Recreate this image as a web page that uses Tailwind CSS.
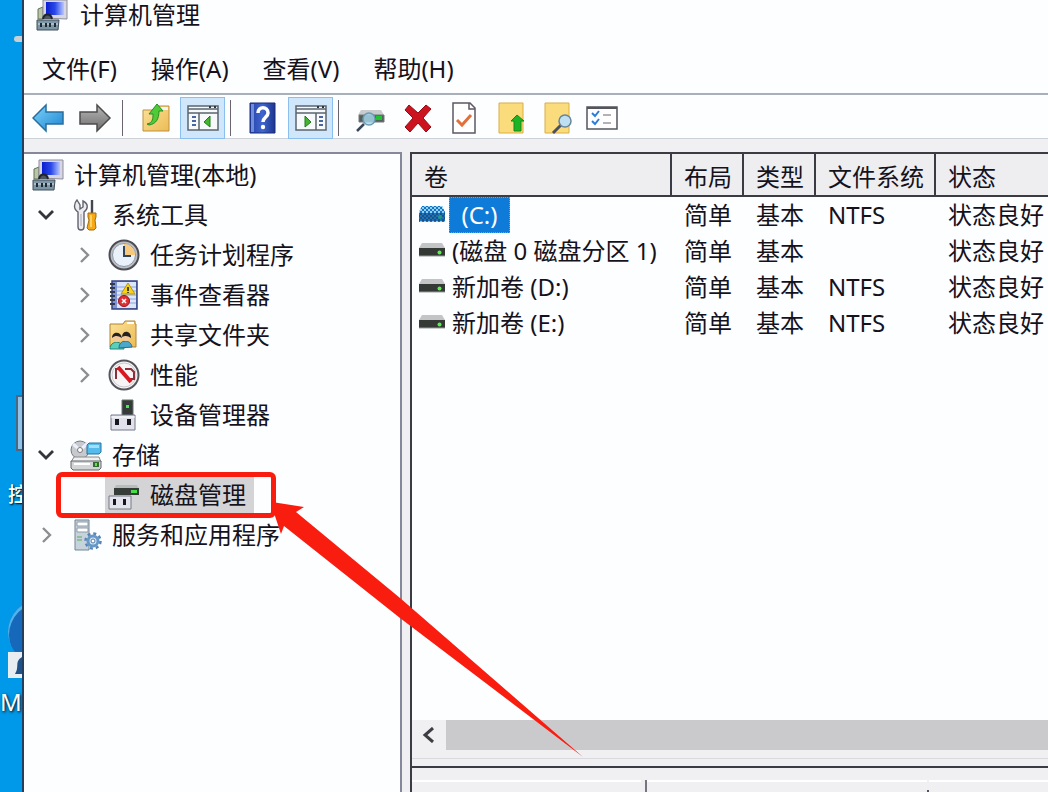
<!DOCTYPE html>
<html lang="zh-CN">
<head>
<meta charset="utf-8">
<title>计算机管理</title>
<script src="https://cdn.jsdelivr.net/npm/@tailwindcss/browser@4"></script>
</head>
<body class="relative flex h-screen overflow-hidden bg-[#0098e8] font-['Noto_Sans','Noto_Sans_CJK_SC',sans-serif] text-2xl leading-8 text-[#15121c]">

<svg class="absolute size-0" aria-hidden="true">
  <defs>
    <linearGradient id="gBlue" x1="0" y1="0" x2="1" y2="1"><stop offset="0" stop-color="#7fd4fb"/><stop offset="1" stop-color="#1b84d0"/></linearGradient>
    <linearGradient id="gScreen" x1="0" y1="0" x2="1" y2="0"><stop offset="0" stop-color="#0a1ed0"/><stop offset=".5" stop-color="#2a48e8"/><stop offset="1" stop-color="#b9c8ff"/></linearGradient>
    <linearGradient id="gGray" x1="0" y1="0" x2="0" y2="1"><stop offset="0" stop-color="#b8b8b8"/><stop offset="1" stop-color="#6c6c6c"/></linearGradient>
    <linearGradient id="gFold" x1="0" y1="0" x2="1" y2="1"><stop offset="0" stop-color="#fbe29a"/><stop offset="1" stop-color="#edbb55"/></linearGradient>
    <linearGradient id="gHelp" x1="0" y1="0" x2="1" y2="0"><stop offset="0" stop-color="#2742a8"/><stop offset=".5" stop-color="#3f66cf"/><stop offset="1" stop-color="#1c348f"/></linearGradient>
    <pattern id="dots" width="4" height="4" patternUnits="userSpaceOnUse"><path d="M0 0h2v2H0zM2 2h2v2H2z" fill="#1673c4"/></pattern>
    <symbol id="computer" viewBox="0 0 32 32">
      <path d="M2 10l5-2v12H2z" fill="#b9c7a6" stroke="#66705c"/>
      <path d="M7 1h24v19l-24-1z" fill="#d7d7e4" stroke="#8d8d9c"/>
      <path d="M10 3h18v13H10z" fill="url(#gScreen)"/>
      <path d="M7 20c1-6 8-6 9 0" fill="#4d5560" stroke="#20242b" stroke-width="2"/>
      <path d="M1 21h22l-1 10H1z" fill="#7d96a5" stroke="#414f5c"/>
      <path d="M2 25h20" stroke="#dbe5ea"/><path d="M5 24v4M10 24v4M14 24v4M19 24v4" stroke="#1d2934" stroke-width="2"/>
    </symbol>
    <symbol id="tools" viewBox="0 0 32 32">
      <path d="M7 1L10 6V10L13 8V2C19 5 18 10 14 13V28C14 32 8 32 8 28V13C3 10 4 4 7 1Z" fill="#ececf0" stroke="#62626d" stroke-width="1.4"/><path d="M11 15v12" stroke="#a6a6b4"/>
      <path d="M22 1v13" stroke="#454550" stroke-width="2.4"/>
      <path d="M18 14h8v4l-1 3 1 8-2 2h-5l-2-2 2-8-1-3z" fill="#f6a817" stroke="#a56d0b"/><path d="M21 16v12" stroke="#ffe080" stroke-width="1.5"/>
    </symbol>
    <symbol id="clock" viewBox="0 0 32 32">
      <circle cx="16" cy="16" r="14.5" fill="#bdbdc2" stroke="#4c4c55" stroke-width="2"/><circle cx="16" cy="16" r="11.5" fill="#e9f1fa" stroke="#8d99a5"/>
      <path d="M16 16V5a11 11 0 0 1 11 11z" fill="#f7c97e"/><path d="M16 7v10h7" fill="none" stroke="#30445a" stroke-width="2"/>
    </symbol>
    <symbol id="events" viewBox="0 0 32 32">
      <path d="M4 2h25v28H4z" fill="#7e95d5" stroke="#35427e" stroke-width="1.5"/><path d="M9 3h19v26H9z" fill="#dbe6fb"/><path d="M9 8h19M9 12h19M9 16h19M9 20h19M9 24h19" stroke="#8aa4de"/>
      <path d="M2 5h5M2 9h5M2 13h5M2 17h5M2 21h5M2 25h5" stroke="#34394c" stroke-width="2"/>
      <path d="M20 4l7 11H13z" fill="#f8d215" stroke="#b5950f"/><path d="M20 8v4M20 13v1" stroke="#222" stroke-width="1.6"/>
      <circle cx="16" cy="22" r="5.5" fill="#df3036" stroke="#99141c"/><path d="M14 20l4 4M18 20l-4 4" stroke="#fff" stroke-width="1.5"/>
    </symbol>
    <symbol id="shared" viewBox="0 0 32 32">
      <path d="M2 5h13l2-3h10v3h1v23H2z" fill="url(#gFold)" stroke="#b08435"/><path d="M19 4h7" stroke="#fff" stroke-width="2"/>
      <path d="M2 30c0-9 13-9 14 0z" fill="#5ad0ba" stroke="#218576"/><path d="M11 29c0-9 12-9 13-1z" fill="#4ba8cd" stroke="#276f91"/>
      <circle cx="9" cy="19" r="4" fill="#f3c99b"/><circle cx="18" cy="18" r="4" fill="#f3c99b"/>
      <path d="M4 19c0-7 9-7 10 0-4-2-6-3-10 0zM14 18c0-7 9-7 9 1-3-2-5-3-9-1z" fill="#222"/>
    </symbol>
    <symbol id="perf" viewBox="0 0 32 32">
      <circle cx="16" cy="16" r="14.5" fill="#f6f4f4" stroke="#55555c" stroke-width="2"/><circle cx="16" cy="16" r="12" fill="none" stroke="#c9c9cd"/>
      <path d="M8 20V10h4M17 10h6l3 3v7h-4" fill="none" stroke="#8b3038" stroke-width="2"/><path d="M10 8l13 15" stroke="#d81922" stroke-width="4"/>
    </symbol>
    <symbol id="device" viewBox="0 0 32 32">
      <path d="M14 1h11v17H14z" fill="#343b38" stroke="#6b716e"/><path d="M18 6h3v3h-3z" fill="#54e05a"/>
      <path d="M3 16h24v15H3z" fill="#e0e1ea" stroke="#767989"/><path d="M3 18h24" stroke="#fff"/><path d="M7 20h4v6H7zM19 20h4v6h-4z" fill="#17171d"/>
    </symbol>
    <symbol id="storage" viewBox="0 0 32 32">
      <circle cx="10" cy="11" r="9" fill="#c6c9cd" stroke="#777b80"/><path d="M10 11L3 5M10 11l8-7" stroke="#eef" stroke-width="3"/><circle cx="10" cy="11" r="2.5" fill="#fff" stroke="#777"/>
      <path d="M17 6l2-2h12v9l-2 2H17z" fill="#55bbec" stroke="#23749f"/><path d="M19 6h10v3H19z" fill="#a3def8"/>
      <path d="M4 18h25l2 5H1z" fill="#eff0f2" stroke="#888"/><path d="M1 22h30v7l-2 2H3l-2-2z" fill="#d2d4d6" stroke="#64676a"/><path d="M4 25h16" stroke="#fff" stroke-width="2"/><path d="M23 23h6v5h-6z" fill="#316b31"/><path d="M25 24h2v3h-2z" fill="#62e348"/>
    </symbol>
    <symbol id="diskmgmt" viewBox="0 0 32 32">
      <path d="M8 6h21l2 4H6z" fill="#b9bcbc"/><path d="M6 9h25v7H6z" fill="#363c38"/><path d="M23 11h6v3h-6z" fill="#43e044"/>
      <path d="M1 17h22v13H1z" fill="#e3e4ec" stroke="#777a87"/><path d="M5 20h3v6H5zM15 20h3v6h-3z" fill="#17171d"/>
    </symbol>
    <symbol id="services" viewBox="0 0 32 32">
      <path d="M5 1h14v30H5z" fill="#c6d3dd" stroke="#738594"/><path d="M7 3h11v4H7zM7 9h11v4H7z" fill="#fff" stroke="#8d9ba7"/><path d="M7 18h5M7 21h5" stroke="#52b04f"/>
      <circle cx="23" cy="22" r="7.5" fill="none" stroke="#5484b8" stroke-width="2.5" stroke-dasharray="3 2.9"/><circle cx="23" cy="22" r="5" fill="#d5e7f7" stroke="#6698c7" stroke-width="3"/><circle cx="23" cy="22" r="2" fill="#fff" stroke="#5079a5"/>
    </symbol>
    <symbol id="down" viewBox="0 0 28 28"><path d="M7 10l7 7 7-7" fill="none" stroke="#34343a" stroke-width="2.8"/></symbol>
    <symbol id="right" viewBox="0 0 28 28"><path d="M11 7l7 7-7 7" fill="none" stroke="#8e8e92" stroke-width="2.4"/></symbol>
    <symbol id="drive" viewBox="0 0 28 20">
      <path d="M4 2h20l3 5H1z" fill="#c2c4c6"/><path d="M1 7h26v8H1z" fill="#343936"/><path d="M1 15h26" stroke="#9a9a9a"/><circle cx="21.5" cy="11.5" r="2" fill="#59f04e"/>
    </symbol>
    <symbol id="driveSel" viewBox="0 0 28 20">
      <path d="M4 1h20l3 6v10H1V7z" fill="#8fd0f5"/><path d="M1 8h26v8H1z" fill="#22507c"/><path d="M4 1h20l3 6v10H1V7z" fill="url(#dots)"/><circle cx="22" cy="12" r="2" fill="#1f9a86"/>
    </symbol>
  </defs>
</svg>

<!-- Desktop strip behind the window -->
<aside class="relative w-[22px] shrink-0 overflow-hidden text-xl text-white" aria-hidden="true">
  <div class="absolute left-3.5 top-9 h-1.5 w-3 rounded-full bg-[#c9cfd3]"></div>
  <div class="absolute left-4 top-[395px] h-14 w-3 border-2 border-[#4f6680] bg-[#8fc4e8]"></div>
  <span class="absolute left-2 top-[481px] font-medium [text-shadow:1px_1px_2px_#000]">控</span>
  <div class="absolute left-2 top-[600px] size-16 rounded-full bg-[#1668ba] shadow-[inset_1px_3px_0_#4fb2ea]"></div>
  <svg class="absolute left-2 top-[652px]" width="26" height="26"><path d="M0 0h26v26H0z" fill="#e8edf2"/><path d="M14 5c-8 5-2 9-7 17h15V5z" fill="#1f5288"/></svg>
  <span class="absolute left-0 top-[686px] text-2xl [text-shadow:1px_1px_3px_#000]">M</span>
</aside>

<div class="flex min-w-0 flex-1 flex-col border-l-2 border-[#263f5c] bg-[#fdfeff]">
  <header class="flex h-[37px] items-center gap-3 pl-3 pb-[7px]">
    <svg class="size-8"><use href="#computer"/></svg>
    <h1>计算机管理</h1>
  </header>

  <nav class="flex h-14 items-center gap-[34px] pl-[18px] pt-2">
    <button>文件(F)</button><button>操作(A)</button><button>查看(V)</button><button>帮助(H)</button>
  </nav>

  <div class="flex h-[46px] shrink-0 items-center border-y border-t-2 border-[#a9b0b9] border-b-[#cdd2d8] pl-2 pt-0.5" role="toolbar" aria-label="工具栏">
    <button aria-label="后退" class="w-[46px]"><svg width="34" height="32"><path d="M1 16L14 3v7h17v12H14v7z" fill="url(#gBlue)" stroke="#286d9f" stroke-width="1.5"/></svg></button>
    <button aria-label="前进" class="w-[44px]"><svg width="34" height="32"><path d="M32 16L19 3v7H2v12h17v7z" fill="url(#gGray)" stroke="#4c4c4c" stroke-width="1.5"/></svg></button>
    <span class="h-9 w-px bg-[#69646f]"></span>
    <button aria-label="上移" class="ml-[17px] w-[40px]"><svg width="32" height="32"><path d="M3 8h14l2-4h10v25H3z" fill="url(#gFold)" stroke="#bf913f"/><path d="M20 5h8v3h-8z" fill="#eef6fa"/><path d="M7 22c6-1 6-6 6-10H9L17 2l6 7h-4c0 8-3 13-10 14z" fill="#4fca38" stroke="#248f22"/></svg></button>
    <button aria-label="显示控制台树" class="flex h-[42px] w-[45px] items-center justify-center border border-[#8bc0ee] bg-[#cfe6fb]"><svg width="32" height="28"><path d="M1 2h30v24H1z" fill="#f7f9fb" stroke="#5b6470" stroke-width="1.5"/><path d="M1 5h30M1 9h30M12 9v17" stroke="#5b6470" stroke-width="1.5"/><path d="M22 3h2M27 3h2" stroke="#333" stroke-width="2"/><path d="M5 13h4M5 17h4M5 21h4" stroke="#4a66a2" stroke-width="2"/><path d="M23 12v11l-6-5z" fill="#44b531" stroke="#227a1c"/></svg></button>
    <span class="ml-[5px] h-9 w-px bg-[#69646f]"></span>
    <button aria-label="帮助" class="ml-[18px] w-[39px]"><svg width="28" height="34"><path d="M1 2h25v30H1z" fill="url(#gHelp)" stroke="#182c78"/><path d="M2 3h3v28H2z" fill="#6f8cdd"/><path d="M9 12c0-7 10-7 10 0 0 4-5 4-5 9" fill="none" stroke="#fff" stroke-width="3.5"/><circle cx="14" cy="26" r="2.2" fill="#fff"/></svg></button>
    <button aria-label="显示操作窗格" class="flex h-[42px] w-[45px] items-center justify-center border border-[#8bc0ee] bg-[#cfe6fb]"><svg width="32" height="28"><path d="M1 2h30v24H1z" fill="#f7f9fb" stroke="#5b6470" stroke-width="1.5"/><path d="M1 5h30M1 9h30M21 9v17" stroke="#5b6470" stroke-width="1.5"/><path d="M22 3h2M27 3h2" stroke="#333" stroke-width="2"/><path d="M24 13h4M24 17h4M24 21h4" stroke="#4a66a2" stroke-width="2"/><path d="M10 12v11l6-5z" fill="#44b531" stroke="#227a1c"/></svg></button>
    <span class="ml-[5px] h-9 w-px bg-[#69646f]"></span>
    <button aria-label="重新扫描磁盘" class="ml-[17px] w-[47px]"><svg width="30" height="32"><path d="M5 8h20l3 5H2z" fill="#c8cccf"/><path d="M3 13h25v7H3z" fill="#53605e" stroke="#777"/><path d="M20 14h6v4h-6z" fill="#1fc431"/><circle cx="13" cy="17" r="6" fill="#a9d9ed" fill-opacity=".8" stroke="#6a9db3" stroke-width="1.5"/><path d="M8 22l-7 7" stroke="#39475d" stroke-width="2.5"/></svg></button>
    <button aria-label="删除" class="w-[48px]"><svg width="30" height="32"><path d="M6 3l9 8 8-8 5 4-8 9 8 9-5 5-8-9-8 9-5-5 8-9-8-8z" fill="#cc1420" stroke="#960c15"/></svg></button>
    <button aria-label="属性" class="w-[47px]"><svg width="26" height="34"><path d="M2 2h17l5 5v25H2z" fill="#fff" stroke="#5c5864" stroke-width="1.5"/><path d="M18 2v6h6" fill="none" stroke="#5c5864" stroke-width="1.5"/><path d="M6 19l5 5 9-10" fill="none" stroke="#e3703a" stroke-width="3"/></svg></button>
    <button aria-label="上一级文件夹" class="w-[46px]"><svg width="28" height="34"><path d="M1 2h24v30H1z" fill="#fbdc7c" stroke="#d9ae45"/><path d="M13 20l6-6 7 6h-3v10h-7V20z" fill="#1eb324" stroke="#168a1b"/></svg></button>
    <button aria-label="查找" class="w-[42px]"><svg width="30" height="34"><path d="M1 2h24v30H1z" fill="#fbdc7c" stroke="#d9ae45"/><path d="M17 24l-8 8" stroke="#4a4f5c" stroke-width="3"/><circle cx="21" cy="20" r="6" fill="#bfe0f3" stroke="#66869c" stroke-width="1.5"/></svg></button>
    <button aria-label="列表"><svg width="32" height="26"><path d="M1 2h30v22H1z" fill="#fff" stroke="#54545e" stroke-width="1.5"/><path d="M1 3h30" stroke="#54545e" stroke-width="2"/><path d="M6 8l3 3 4-5M6 16l3 3 4-5" fill="none" stroke="#2b7bd8" stroke-width="2"/><path d="M17 10h8M17 18h8" stroke="#9a9a9f" stroke-width="1.5"/></svg></button>
  </div>

  <main class="flex min-h-0 flex-1 gap-2 bg-[#f0f0f2] pt-[13px]">
    <section class="w-[378px] shrink-0 border-r-2 border-t-2 border-[#85879a] bg-[#fdfeff]" aria-label="控制台树">
      <ul class="whitespace-nowrap">
        <li class="flex h-10 items-center gap-2.5 pl-2 pt-0.5"><svg class="size-8"><use href="#computer"/></svg><span>计算机管理(本地)</span></li>
        <li class="flex h-10 items-center gap-2.5 pl-2 pt-0.5"><svg class="size-7"><use href="#down"/></svg><svg class="size-8"><use href="#tools"/></svg><span>系统工具</span></li>
        <li class="flex h-10 items-center gap-2.5 pl-[46px] pt-0.5"><svg class="size-7"><use href="#right"/></svg><svg class="size-8"><use href="#clock"/></svg><span>任务计划程序</span></li>
        <li class="flex h-10 items-center gap-2.5 pl-[46px] pt-0.5"><svg class="size-7"><use href="#right"/></svg><svg class="size-8"><use href="#events"/></svg><span>事件查看器</span></li>
        <li class="flex h-10 items-center gap-2.5 pl-[46px] pt-0.5"><svg class="size-7"><use href="#right"/></svg><svg class="size-8"><use href="#shared"/></svg><span>共享文件夹</span></li>
        <li class="flex h-10 items-center gap-2.5 pl-[46px] pt-0.5"><svg class="size-7"><use href="#right"/></svg><svg class="size-8"><use href="#perf"/></svg><span>性能</span></li>
        <li class="flex h-10 items-center gap-2.5 pl-[84px] pt-0.5"><svg class="size-8"><use href="#device"/></svg><span>设备管理器</span></li>
        <li class="flex h-10 items-center gap-2.5 pl-2 pt-0.5"><svg class="size-7"><use href="#down"/></svg><svg class="size-8"><use href="#storage"/></svg><span>存储</span></li>
        <li class="flex h-10 items-center pl-[81px] pt-0.5"><span class="flex h-9 items-center gap-2.5 bg-[#d4d4d6] pl-[3px] pr-2"><svg class="size-8"><use href="#diskmgmt"/></svg><span>磁盘管理</span></span></li>
        <li class="flex h-10 items-center gap-2.5 pl-2 pt-0.5"><svg class="size-7"><use href="#right"/></svg><svg class="size-8"><use href="#services"/></svg><span>服务和应用程序</span></li>
      </ul>
    </section>

    <section class="flex min-w-0 flex-1 flex-col overflow-hidden border-l-2 border-[#3b3b44]" aria-label="卷列表">
      <div class="flex-1 border-t-2 border-[#3b3b44] bg-[#fdfeff]">
        <table class="w-full table-fixed border-collapse whitespace-nowrap text-left">
          <colgroup><col class="w-[259px]"><col class="w-[72px]"><col class="w-[72px]"><col class="w-[120px]"><col></colgroup>
          <thead class="bg-[#eeeef0]">
            <tr class="h-[42px] border-b-2 border-[#3b3b44]">
              <th class="border-r-2 border-[#3b3b44] pl-3 pt-1 font-normal">卷</th>
              <th class="border-r-2 border-[#3b3b44] pl-3 pt-1 font-normal">布局</th>
              <th class="border-r-2 border-[#3b3b44] pl-3 pt-1 font-normal">类型</th>
              <th class="border-r-2 border-[#3b3b44] pl-3 pt-1 font-normal">文件系统</th>
              <th class="pl-3 pt-1 font-normal">状态</th>
            </tr>
          </thead>
          <tbody>
            <tr class="h-9"><td><div class="flex items-center pl-1.5"><svg class="h-5 w-7"><use href="#driveSel"/></svg><span class="ml-[3px] flex h-9 w-[61px] items-center justify-center border border-dotted border-[#d98a3c] bg-[#0f7bd8] text-white">(C:)</span></div></td><td class="pl-[13px]">简单</td><td class="pl-[13px]">基本</td><td class="pl-[13px]">NTFS</td><td class="pl-[13px]">状态良好</td></tr>
            <tr class="h-9"><td><div class="flex items-center gap-1.5 pl-1.5"><svg class="h-5 w-7"><use href="#drive"/></svg>(磁盘 0 磁盘分区 1)</div></td><td class="pl-[13px]">简单</td><td class="pl-[13px]">基本</td><td></td><td class="pl-[13px]">状态良好</td></tr>
            <tr class="h-9"><td><div class="flex items-center gap-1.5 pl-1.5"><svg class="h-5 w-7"><use href="#drive"/></svg>新加卷 (D:)</div></td><td class="pl-[13px]">简单</td><td class="pl-[13px]">基本</td><td class="pl-[13px]">NTFS</td><td class="pl-[13px]">状态良好</td></tr>
            <tr class="h-9"><td><div class="flex items-center gap-1.5 pl-1.5"><svg class="h-5 w-7"><use href="#drive"/></svg>新加卷 (E:)</div></td><td class="pl-[13px]">简单</td><td class="pl-[13px]">基本</td><td class="pl-[13px]">NTFS</td><td class="pl-[13px]">状态良好</td></tr>
          </tbody>
        </table>
      </div>
      <div class="flex h-[30px] shrink-0">
        <button aria-label="向左滚动" class="flex w-[34px] items-center justify-center"><svg width="16" height="16"><path d="M12 1L4 8l8 7" fill="none" stroke="#3d3d42" stroke-width="3"/></svg></button>
        <div class="flex-1 bg-[#cacacc]"></div>
      </div>
      <div class="mt-2 h-2 shrink-0 border-t border-[#d9dade]"></div>
      <div class="h-[26px] shrink-0 border-t-2 border-[#3b3b44] pt-3">
        <div class="flex h-3 items-end">
          <div class="h-3 w-[229px] border-t-2 border-white"></div>
          <div class="ml-1 h-3 w-0.5 bg-[#77757f]"></div>
          <div class="h-3 w-[280px] border-t-2 border-white"></div>
          <div class="h-0.5 w-0.5 bg-[#55535d]"></div>
          <div class="h-3 flex-1 border-t-2 border-white"></div>
        </div>
      </div>
    </section>
  </main>
</div>

<!-- Annotation: highlighted tree item and pointer -->
<div class="absolute left-[56px] top-[472px] h-[46px] w-[220px] rounded-md border-5 border-[#f91d10]"></div>
<svg class="pointer-events-none absolute left-0 top-0" width="600" height="780" aria-hidden="true"><path d="M272 502L304 507L296 512L400 598L583 757L400 618L284 526L281 534L275 516Z" fill="#f91d10"/></svg>
</body>
</html>
